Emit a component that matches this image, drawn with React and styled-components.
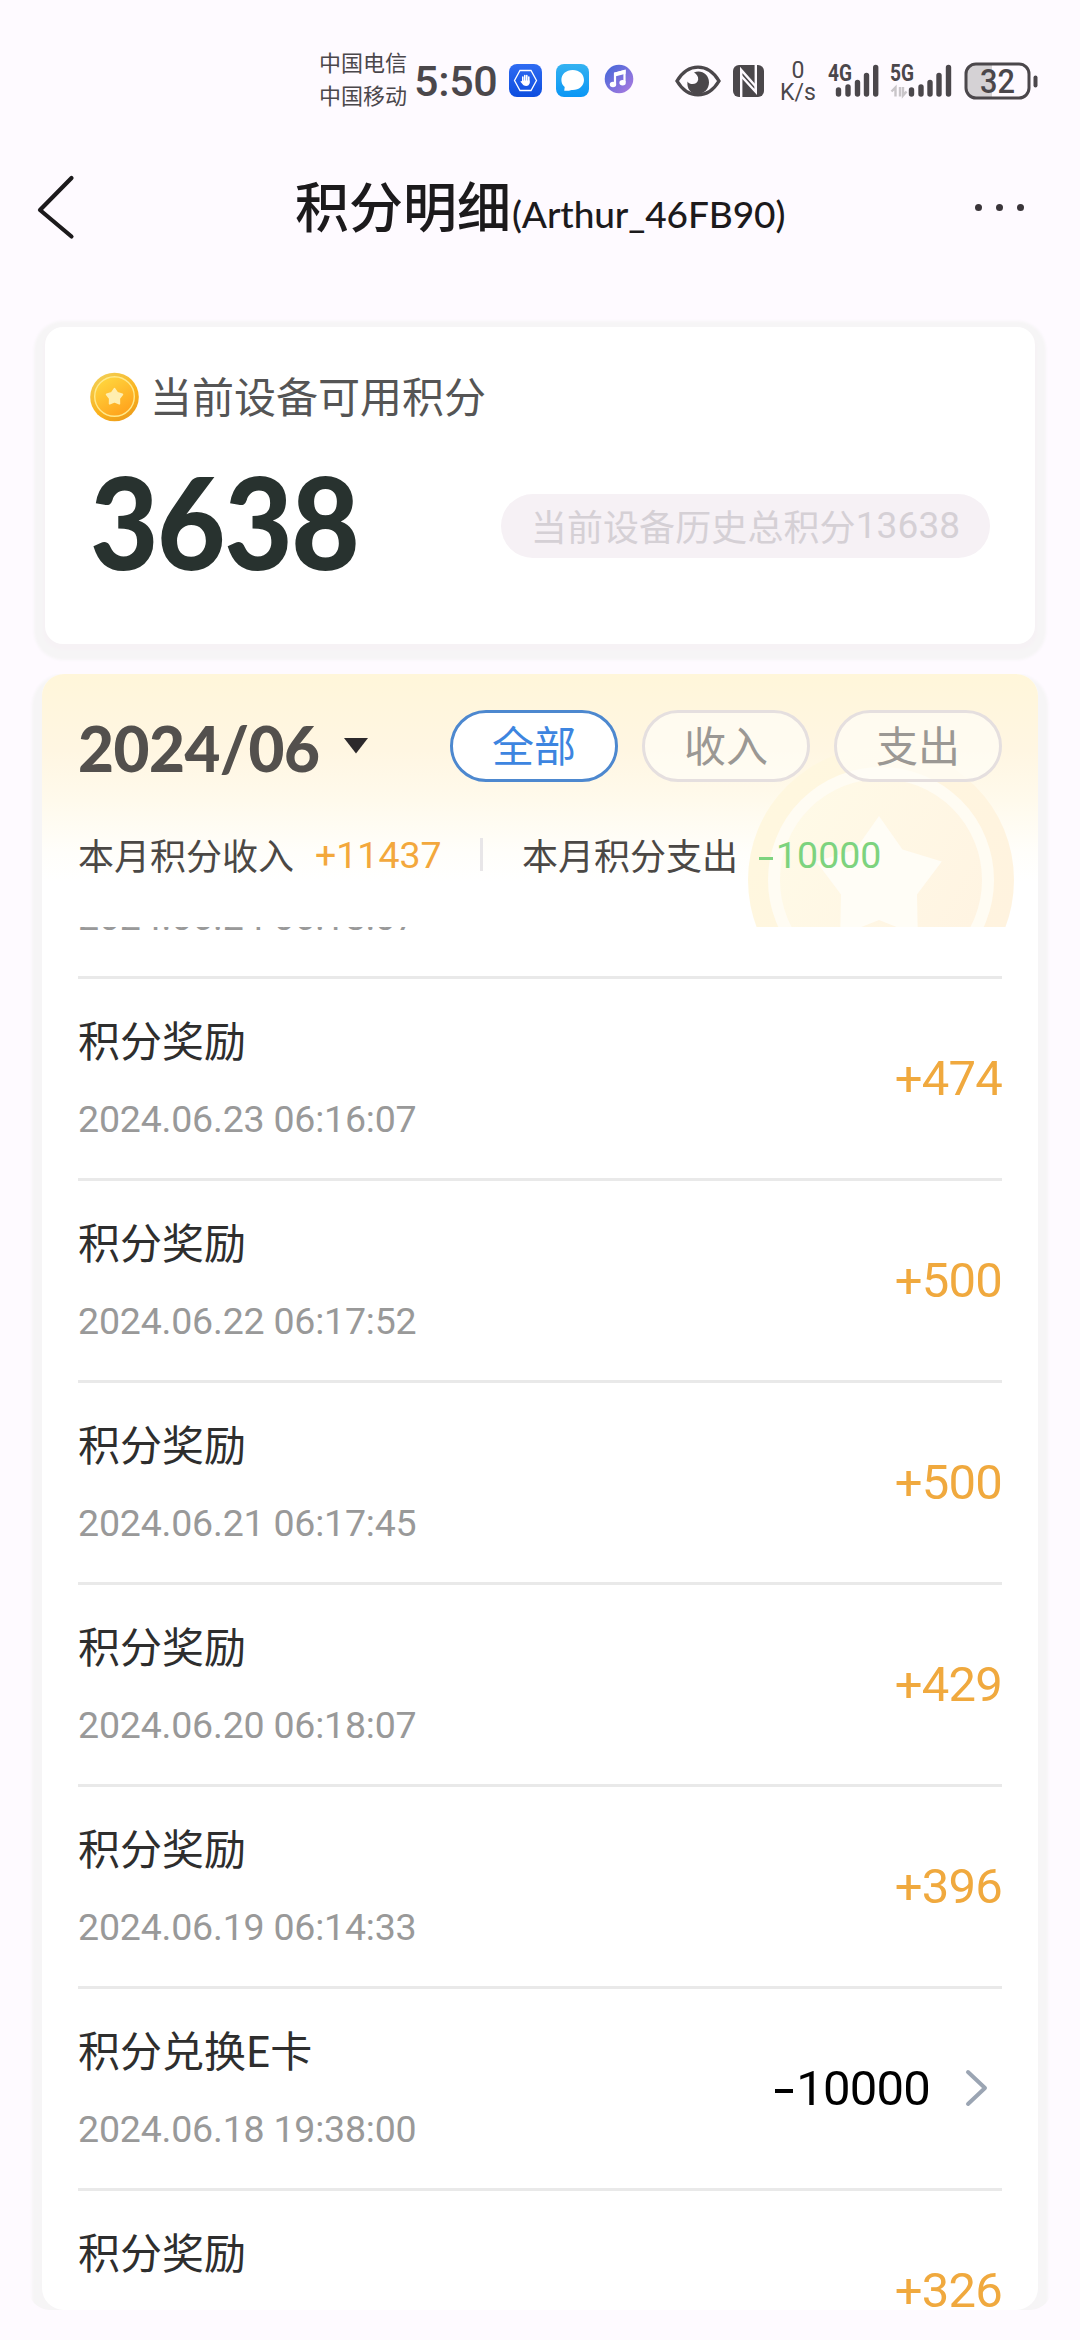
import React, { useState } from 'react';
import styled, { createGlobalStyle } from 'styled-components';

const TABS = [
  { id: 'all', title: '全部' },
  { id: 'income', title: '收入' },
  { id: 'expense', title: '支出' },
];

const RECORDS = [
  { id: 1, title: '', time: '2024.06.24 06:18:07', amount: '' },
  { id: 2, title: '积分奖励', time: '2024.06.23 06:16:07', amount: '+474' },
  { id: 3, title: '积分奖励', time: '2024.06.22 06:17:52', amount: '+500' },
  { id: 4, title: '积分奖励', time: '2024.06.21 06:17:45', amount: '+500' },
  { id: 5, title: '积分奖励', time: '2024.06.20 06:18:07', amount: '+429' },
  { id: 6, title: '积分奖励', time: '2024.06.19 06:14:33', amount: '+396' },
  { id: 7, title: '积分兑换E卡', time: '2024.06.18 19:38:00', amount: '-10000', detail: true },
  { id: 8, title: '积分奖励', time: '', amount: '+326' },
];

const STAR = 'M0 -66 L23.5 -32.4 L62.8 -20.4 L38 12.4 L38.8 53.4 L0 38 L-38.8 53.4 L-38 12.4 L-62.8 -20.4 L-23.5 -32.4 Z';

const CoinIcon = () => (
  <svg width="50" height="50" viewBox="0 0 50 50">
    <defs>
      <linearGradient id="coinEdge" x1="0.2" y1="0" x2="0.8" y2="1">
        <stop offset="0" stopColor="#f2cf55" />
        <stop offset="0.6" stopColor="#fbb21c" />
        <stop offset="1" stopColor="#eb9b1c" />
      </linearGradient>
      <linearGradient id="coinFace" x1="0.2" y1="0" x2="0.8" y2="1">
        <stop offset="0" stopColor="#ffd83f" />
        <stop offset="1" stopColor="#ff9f1a" />
      </linearGradient>
    </defs>
    <circle cx="24.5" cy="25" r="24.3" fill="url(#coinEdge)" />
    <circle cx="24.5" cy="24.5" r="19.8" fill="url(#coinFace)" stroke="#ffe98a" strokeWidth="1.4" />
    <path d={STAR} transform="translate(24.5 25) scale(0.125)" fill="#ffeeb0" stroke="#ffeeb0" strokeWidth="14" strokeLinejoin="round" />
  </svg>
);

const SignalIcon = ({ label, data }) => (
  <svg width="52" height="36" viewBox="0 0 52 36">
    <text x="0" y="17.5" textLength="24" lengthAdjust="spacingAndGlyphs" fontFamily="Roboto, sans-serif" fontWeight="700" fontSize="23" fill="#4b474b">
      {label}
    </text>
    <g stroke="#4b474b" strokeWidth="5.4" strokeLinecap="round">
      <path d={data ? 'M21.5 27V31' : 'M10.5 27V31'} />
      <path d={data ? 'M31 24V31' : 'M20 24V31'} />
      <path d={data ? 'M40 19.5V31' : 'M29.5 19.5V31'} />
      <path d={data ? 'M49 12.5V31' : 'M38.5 12.5V31'} />
      <path d={data ? 'M58.5 4.5V31' : 'M47.7 4.5V31'} />
    </g>
    {data && (
      <path d="M5.5 33.5V24.5L1.5 28.5M10 24V33.5M13 24V32.5L16.5 28.5" fill="none" stroke="#c9c5c9" strokeWidth="2.4" />
    )}
  </svg>
);

const StatusBar = () => (
  <Status>
    <Carriers>
      <span>中国电信</span>
      <span>中国移动</span>
    </Carriers>
    <Clock>5:50</Clock>
    <AppIcons>
      <svg width="33" height="33" viewBox="0 0 33 33">
        <defs>
          <linearGradient id="guard" x1="0" y1="0" x2="0" y2="1">
            <stop offset="0" stopColor="#2f6bf2" />
            <stop offset="1" stopColor="#0d4ddf" />
          </linearGradient>
        </defs>
        <rect width="33" height="33" rx="8" fill="url(#guard)" />
        <path d="M11 6.5H22L27.5 16.5L22 26.5H11L5.5 16.5Z" fill="none" stroke="#fff" strokeWidth="1.3" />
        <path
          d="M13.8 13V18M15.8 11.5V18M17.8 11.5V18M19.8 13V19"
          stroke="#fff"
          strokeWidth="1.6"
          strokeLinecap="round"
        />
        <path d="M13 16.5H20.6V18.5C20.6 23 15 22.7 13.6 20.3L11.3 17.4L13 17Z" fill="#fff" />
      </svg>
      <svg width="33" height="33" viewBox="0 0 33 33">
        <defs>
          <linearGradient id="chat" x1="0" y1="0" x2="0" y2="1">
            <stop offset="0" stopColor="#35b2f1" />
            <stop offset="1" stopColor="#0a96f5" />
          </linearGradient>
        </defs>
        <rect width="33" height="33" rx="8" fill="url(#chat)" />
        <path d="M16.7 6C23.3 6 28 10.3 28 16C28 21.9 23 26 16.7 26C15 26 14.3 26.4 13 26.8H8.2L8.7 23C6.5 21.3 5.4 18.9 5.4 16C5.4 10.3 10 6 16.7 6Z" fill="#fff" />
      </svg>
      <MusicIcon width="30" height="30" viewBox="0 0 30 30">
        <defs>
          <linearGradient id="music" x1="0" y1="0" x2="1" y2="1">
            <stop offset="0" stopColor="#3f66d9" />
            <stop offset="1" stopColor="#b07be0" />
          </linearGradient>
        </defs>
        <circle cx="15" cy="15" r="14.3" fill="url(#music)" />
        <path d="M11 20V9.5L20.5 7V18" fill="none" stroke="#fff" strokeWidth="2.2" />
        <path d="M10 8.7L21.6 5.8V9.8L10 12.7Z" fill="#fff" />
        <ellipse cx="9" cy="20.5" rx="3.2" ry="2.7" fill="#fff" />
        <ellipse cx="18.6" cy="18.7" rx="3.2" ry="2.7" fill="#fff" />
      </MusicIcon>
    </AppIcons>
    <SystemIcons>
      <svg width="46" height="32" viewBox="0 0 46 32">
        <path d="M2 16C13 -2.5 33 -2.5 44 16C33 34.5 13 34.5 2 16Z" fill="none" stroke="#4b474b" strokeWidth="3.4" />
        <path d="M19 7.5C26 4.5 34 9 34 17.5C34 24 29 29 22.5 29C16 29 11.5 24 12.5 16.5C15 20.5 22.5 20 23.2 14.5C23.5 11.5 21.5 9 19 7.5Z" fill="#4b474b" />
      </svg>
      <NfcIcon width="32" height="32" viewBox="0 0 32 32">
        <rect width="31" height="32" rx="6" fill="#4b474b" />
        <path d="M8.2 32V5L22.8 21.500V26.500" fill="none" stroke="#fefaff" strokeWidth="2.4" />
        <path d="M22.8 0V27L8.2 11" fill="none" stroke="#fefaff" strokeWidth="2.4" />
      </NfcIcon>
      <NetSpeed>
        <span>0</span>
        <span>K/s</span>
      </NetSpeed>
      <SignalIcon label="4G" />
      <SignalData>
        <SignalIcon label="5G" data />
      </SignalData>
      <BatteryIcon width="75" height="38" viewBox="0 0 75 38">
        <path d="M28 2H12Q2 2 2 12V26Q2 36 12 36H28Z" fill="#d5d2d5" />
        <rect x="2" y="2" width="63" height="34" rx="10" fill="none" stroke="#4b474b" strokeWidth="3" />
        <path d="M71.5 15.5V23.5" stroke="#4b474b" strokeWidth="4" strokeLinecap="round" />
        <text x="16" y="30.5" textLength="35" lengthAdjust="spacingAndGlyphs" fontFamily="Roboto, sans-serif" fontWeight="500" fontSize="33" fill="#4b474b">
          32
        </text>
      </BatteryIcon>
    </SystemIcons>
  </Status>
);

const App = () => {
  const [activeTab, setActiveTab] = useState('all');

  return (
    <>
      <GlobalStyle />
      <Screen>
        <StatusBar />
        <Header>
          <BackButton>
            <svg width="44" height="66" viewBox="0 0 44 66">
              <path d="M36.5 3L5 35L36.5 61.5" fill="none" stroke="#1c1a1c" strokeWidth="4.2" strokeLinecap="round" strokeLinejoin="round" />
            </svg>
          </BackButton>
          <Title>
            积分明细<Device>(Arthur_46FB90)</Device>
          </Title>
          <MoreButton>
            <Dot />
            <Dot />
            <Dot />
          </MoreButton>
        </Header>

        <BalanceCard>
          <BalanceLabel>
            <CoinIcon />
            <span>当前设备可用积分</span>
          </BalanceLabel>
          <BalanceRow>
            <Balance>3638</Balance>
            <HistoryTag>
              当前设备历史总积分<span>13638</span>
            </HistoryTag>
          </BalanceRow>
        </BalanceCard>

        <DetailCard>
          <DetailHeader>
            <Watermark width="268" height="268" viewBox="-134 -134 268 268">
              <defs>
                <linearGradient id="markRing" x1="0" y1="0" x2="1" y2="0.6">
                  <stop offset="0" stopColor="#fff8df" />
                  <stop offset="1" stopColor="#fff3df" />
                </linearGradient>
                <linearGradient id="markFace" x1="0" y1="0" x2="1" y2="0.6">
                  <stop offset="0" stopColor="#fffbe8" />
                  <stop offset="1" stopColor="#fff4e2" />
                </linearGradient>
              </defs>
              <circle r="133" fill="url(#markRing)" />
              <circle r="107" fill="url(#markFace)" stroke="#fffcf3" strokeWidth="12" />
              <path d={STAR} transform="translate(-2 2)" fill="#fffdf6" />
            </Watermark>
            <FilterRow>
              <Month>2024/06</Month>
              <Caret width="24" height="16" viewBox="0 0 24 16">
                <path d="M0 0H24L12 15.5Z" fill="#2c292b" />
              </Caret>
              <Tabs>
                {TABS.map(tab => (
                  <Tab
                    key={tab.id}
                    $active={activeTab === tab.id}
                    onClick={() => setActiveTab(tab.id)}
                  >
                    {tab.title}
                  </Tab>
                ))}
              </Tabs>
            </FilterRow>
            <Summary>
              <SummaryLabel>本月积分收入</SummaryLabel>
              <SummaryValue $color="#f3a83c">+11437</SummaryValue>
              <Divider />
              <SummaryLabel>本月积分支出</SummaryLabel>
              <SummaryValue $color="#7dd37e">
                <Minus $width={14} $thick={3} />
                10000
              </SummaryValue>
            </Summary>
          </DetailHeader>
          <RecordList>
            {RECORDS.map(item => (
              <Record key={item.id}>
                <RecordInfo>
                  <RecordTitle>{item.title}</RecordTitle>
                  <RecordTime>{item.time}</RecordTime>
                </RecordInfo>
                <Amount $detail={item.detail}>
                  {item.detail && <Minus $width={18} $thick={4} />}
                  {item.amount.replace('-', '')}
                  {item.detail && (
                    <Chevron width="24" height="40" viewBox="0 0 24 40">
                      <path d="M3 4L20 20L3 36" fill="none" stroke="#9ba5b3" strokeWidth="4" strokeLinecap="round" strokeLinejoin="round" />
                    </Chevron>
                  )}
                </Amount>
              </Record>
            ))}
          </RecordList>
        </DetailCard>
      </Screen>
    </>
  );
};
export default App;

const GlobalStyle = createGlobalStyle`
  * {
    box-sizing: border-box;
  }
  body {
    margin: 0;
    background: #fefaff;
    font-family: Lato, 'Noto Sans CJK SC', sans-serif;
  }
`;

const Screen = styled.div`
  width: 1080px;
  height: 2340px;
  overflow: hidden;
  background: #fefaff;
`;

const Status = styled.div`
  display: flex;
  align-items: center;
  height: 161px;
  padding-left: 319px;
  color: #4b474b;
`;

const Carriers = styled.div`
  display: flex;
  flex-direction: column;
  width: 95px;
  padding-bottom: 3px;
  font-size: 22px;
  line-height: 33px;
`;

const Clock = styled.div`
  width: 95px;
  font-family: Roboto, sans-serif;
  font-size: 43px;
  font-weight: 500;
  letter-spacing: -0.3px;
  line-height: 60px;
`;

const AppIcons = styled.div`
  display: flex;
  align-items: center;
  gap: 14px;
  width: 166px;
`;

const MusicIcon = styled.svg`
  margin: 0 0 3px 1px;
`;

const SystemIcons = styled.div`
  display: flex;
  align-items: center;
`;

const NfcIcon = styled.svg`
  margin-left: 12px;
`;

const NetSpeed = styled.div`
  display: flex;
  flex-direction: column;
  align-items: center;
  width: 36px;
  margin: 3px 12px 0 15px;
  font-family: Roboto, sans-serif;
  font-size: 23px;
  line-height: 22px;
`;

const SignalData = styled.div`
  display: flex;
  margin-left: 10px;
  svg {
    overflow: visible;
  }
`;

const BatteryIcon = styled.svg`
  margin-left: 22px;
`;

const Header = styled.div`
  display: flex;
  align-items: center;
  justify-content: space-between;
  height: 93px;
  padding: 0 56px 0 35px;
`;

const BackButton = styled.div`
  display: flex;
  width: 260px;
`;

const Title = styled.div`
  display: flex;
  align-items: baseline;
  flex: 1;
  padding-top: 7px;
  white-space: nowrap;
  font-size: 54px;
  line-height: 70px;
  font-weight: 500;
  color: #1c1a1c;
`;

const Device = styled.span`
  margin-left: 1px;
  font-size: 37px;
  letter-spacing: -0.1px;
`;

const MoreButton = styled.div`
  display: flex;
  gap: 14px;
`;

const Dot = styled.span`
  width: 7px;
  height: 7px;
  border-radius: 50%;
  background: #3a353a;
`;

const BalanceCard = styled.div`
  height: 317px;
  margin: 73px 45px 0;
  padding: 45px 45px 0;
  border-radius: 18px;
  background: #fff;
  box-shadow: 0 4px 3px 2px #f6f2f5, 0 5px 3px 11px #f6f5f6;
`;

const BalanceLabel = styled.div`
  display: flex;
  align-items: center;
  gap: 10px;
  height: 50px;
  font-size: 42px;
  line-height: 50px;
  color: #555;

  span {
    margin-top: -1px;
  }
`;

const BalanceRow = styled.div`
  display: flex;
  align-items: center;
  justify-content: space-between;
  height: 120px;
  margin-top: 41px;
`;

const Balance = styled.div`
  width: 280px;
  margin-top: -4px;
  font-size: 127px;
  line-height: 120px;
  font-weight: 900;
  letter-spacing: -1.5px;
  color: #28322f;
  transform: scaleX(0.93);
  transform-origin: left center;
`;

const HistoryTag = styled.div`
  display: flex;
  align-items: center;
  justify-content: center;
  width: 489px;
  height: 64px;
  margin-top: 5px;
  padding-bottom: 2px;
  border-radius: 32px;
  font-family: Roboto, 'Noto Sans CJK SC', sans-serif;
  font-size: 36px;
  letter-spacing: 0.1px;
  color: #d5d0d5;
  background: #f6f1f5;

  span {
    padding-top: 2px;
    font-size: 37px;
  }
`;

const DetailCard = styled.div`
  display: flex;
  flex-direction: column;
  height: 1636px;
  margin: 30px 42px 0;
  border-radius: 22px;
  background: #fff;
  box-shadow: 0 10px 3px 10px #f6f5f6;
  clip-path: inset(0 -14px 0 -14px round 22px);
`;

const DetailHeader = styled.div`
  position: relative;
  flex: none;
  height: 253px;
  padding: 36px 36px 0;
  overflow: hidden;
  border-radius: 22px 22px 0 0;
  background: linear-gradient(#fff6da, #fff6e2 30%, #fffaec 50%, #fffefa 70%, #fff 82%);
`;

const Watermark = styled.svg`
  position: absolute;
  top: 72px;
  right: 23px;
`;

const FilterRow = styled.div`
  position: relative;
  display: flex;
  align-items: center;
  height: 72px;
`;

const Month = styled.div`
  padding-top: 4px;
  font-size: 62px;
  font-weight: 900;
  letter-spacing: -0.5px;
  color: #53504d;
`;

const Caret = styled.svg`
  margin-left: 24px;
`;

const Tabs = styled.div`
  display: flex;
  gap: 24px;
  margin-left: auto;
`;

const Tab = styled.div`
  display: flex;
  align-items: center;
  justify-content: center;
  width: 168px;
  height: 72px;
  padding-bottom: 5px;
  border: 3px solid ${({ $active }) => ($active ? '#4d88cf' : '#e5dfdf')};
  border-radius: 36px;
  font-size: 42px;
  color: ${({ $active }) => ($active ? '#3d85e0' : '#9b9894')};
  background: ${({ $active }) => ($active ? '#fff' : 'rgba(255, 253, 247, 0.7)')};
`;

const Summary = styled.div`
  position: relative;
  display: flex;
  align-items: center;
  height: 50px;
  margin-top: 47px;
  font-size: 36px;
`;

const SummaryLabel = styled.span`
  color: #4b4845;
`;

const SummaryValue = styled.span`
  display: flex;
  align-items: center;
  width: 127px;
  margin-left: 21px;
  padding-top: 2px;
  font-family: Roboto, sans-serif;
  font-size: 37.5px;
  white-space: nowrap;
  color: ${({ $color }) => $color};
`;

const Divider = styled.span`
  width: 3px;
  height: 33px;
  margin: 0 39px 0 38px;
  background: #e8e6e8;
`;

const Minus = styled.span`
  width: ${({ $width }) => $width}px;
  height: ${({ $thick }) => $thick}px;
  margin: 6px 3px 0 0;
  background: currentColor;
`;

const RecordList = styled.div`
  flex: 1;
  min-height: 0;
  padding: 0 36px;
  overflow: hidden;
  border-radius: 0 0 22px 22px;

  & > :first-child {
    margin-top: -150px;
  }
`;

const Record = styled.div`
  display: flex;
  justify-content: space-between;
  height: 202px;
  padding-top: 38px;
  border-bottom: 3px solid #e9e9e9;
`;

const RecordInfo = styled.div`
  display: flex;
  flex-direction: column;
  gap: 30px;
`;

const RecordTitle = styled.div`
  height: 48px;
  font-size: 42px;
  line-height: 48px;
  color: #2e2e2e;
`;

const RecordTime = styled.div`
  font-family: Roboto, sans-serif;
  font-size: 37.5px;
  line-height: 48px;
  letter-spacing: -0.2px;
  color: #999;
`;

const Amount = styled.div`
  display: flex;
  align-items: center;
  height: 60px;
  margin-top: 31px;
  padding-right: ${({ $detail }) => ($detail ? '13px' : '0')};
  font-family: Roboto, sans-serif;
  font-size: 49px;
  letter-spacing: -0.8px;
  color: ${({ $detail }) => ($detail ? '#000' : '#f0a93e')};
`;

const Chevron = styled.svg`
  margin-left: 35px;
`;
